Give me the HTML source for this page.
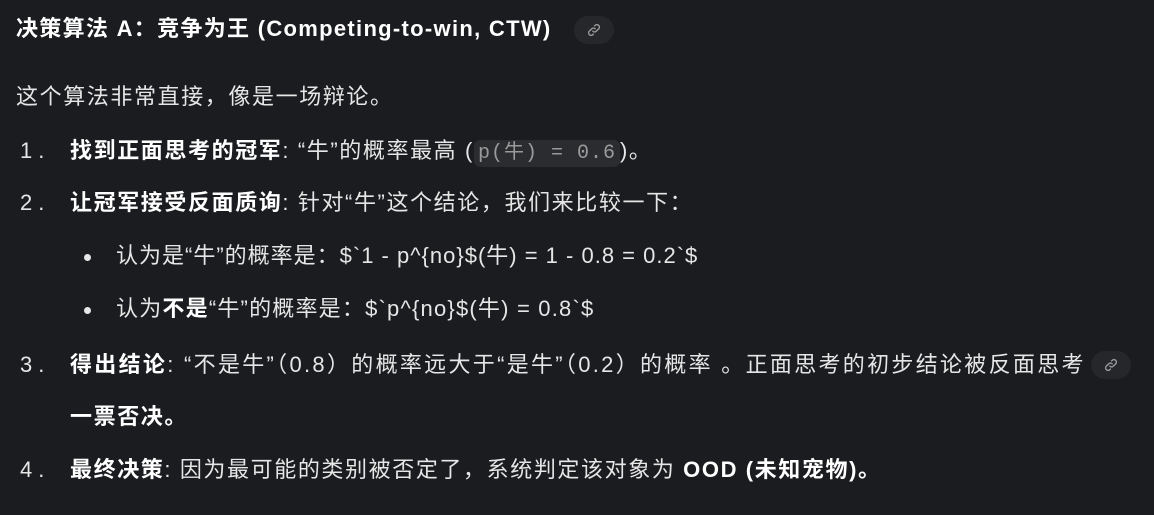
<!DOCTYPE html><html><head><style>
body{margin:0;width:1154px;height:515px;background:#1b1c1f;color:#e6e6e6;font-family:"Liberation Sans","Noto Sans CJK SC",sans-serif;font-size:22px;letter-spacing:1.6px;overflow:hidden;position:relative}
.l{position:absolute;white-space:nowrap;line-height:28px}
b{font-weight:bold;color:#fff}
.n{position:absolute;left:20px;letter-spacing:6px}
.t{position:absolute;left:70px}
.code{font-family:"Liberation Mono","Noto Sans CJK SC",monospace;color:#9a9a9a;background:#2b2c2f;border-radius:6px;padding:2px 4px;font-size:20px;letter-spacing:1px}
.pill{display:inline-block;width:40px;height:28px;border-radius:14px;background:#26272a;vertical-align:middle;position:relative}
.pill svg{position:absolute;left:13px;top:7px}
.dot{position:absolute;left:84px;width:7px;height:7px;border-radius:4px;background:#e6e6e6}
</style></head><body>
<div class="l" style="left:16px;top:15px;letter-spacing:1.3px"><b>决策算法 A：竞争为王 (Competing-to-win, CTW)</b></div>
<div class="pill" style="position:absolute;left:574px;top:16px"><svg width="14" height="14" viewBox="0 0 24 24" fill="none" stroke="#9a9a9a" stroke-width="2.4" stroke-linecap="round"><path d="M10 14a4 4 0 0 0 6 0l4-4a4 4 0 0 0-6-6l-1 1"/><path d="M14 10a4 4 0 0 0-6 0l-4 4a4 4 0 0 0 6 6l1-1"/></svg></div>
<div class="l" style="left:16px;top:83px">这个算法非常直接，像是一场辩论。</div>
<div class="l" style="top:137px;width:100%"><span class="n">1.</span><span class="t"><b>找到正面思考的冠军</b>: “牛”的概率最高 (<span class="code">p(牛) = 0.6</span>)。</span></div>
<div class="l" style="top:189px;width:100%"><span class="n">2.</span><span class="t"><b>让冠军接受反面质询</b>: 针对“牛”这个结论，我们来比较一下：</span></div>
<div class="dot" style="top:254px"></div>
<div class="l" style="left:116px;top:242px;letter-spacing:1px">认为是“牛”的概率是：$`1 - p^{no}$(牛) = 1 - 0.8 = 0.2`$</div>
<div class="dot" style="top:307px"></div>
<div class="l" style="left:116px;top:295px;letter-spacing:1.2px">认为<b>不是</b>“牛”的概率是：$`p^{no}$(牛) = 0.8`$</div>
<div class="l" style="top:351px;width:100%;letter-spacing:2.3px"><span class="n">3.</span><span class="t"><b>得出结论</b>: “不是牛”（0.8）的概率远大于“是牛”（0.2）的概率 。正面思考的初步结论被反面思考</span></div>
<div class="pill" style="position:absolute;left:1091px;top:351px"><svg width="14" height="14" viewBox="0 0 24 24" fill="none" stroke="#9a9a9a" stroke-width="2.4" stroke-linecap="round"><path d="M10 14a4 4 0 0 0 6 0l4-4a4 4 0 0 0-6-6l-1 1"/><path d="M14 10a4 4 0 0 0-6 0l-4 4a4 4 0 0 0 6 6l1-1"/></svg></div>
<div class="l" style="left:70px;top:403px"><b>一票否决。</b></div>
<div class="l" style="top:456px;width:100%"><span class="n">4.</span><span class="t"><b>最终决策</b>: 因为最可能的类别被否定了，系统判定该对象为 <b>OOD (未知宠物)。</b></span></div>
</body></html>
